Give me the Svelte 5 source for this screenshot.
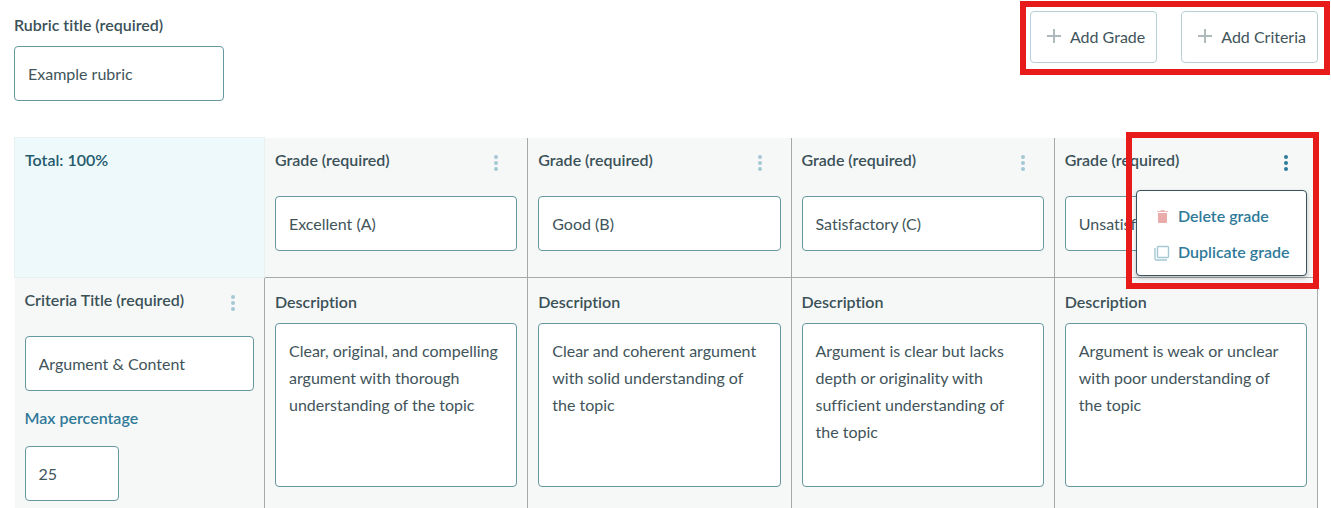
<script>
  let title = $state('Example rubric');
  let grades = $state([
    { name: 'Excellent (A)', description: 'Clear, original, and compelling argument with thorough understanding of the topic' },
    { name: 'Good (B)', description: 'Clear and coherent argument with solid understanding of the topic' },
    { name: 'Satisfactory (C)', description: 'Argument is clear but lacks depth or originality with sufficient understanding of the topic' },
    { name: 'Unsatisfactory (D)', description: 'Argument is weak or unclear with poor understanding of the topic' }
  ]);
  let criteria = $state({ title: 'Argument & Content', max: '25' });
  let openMenu = $state(3);
</script>

{#snippet plus()}
  <svg class="plus" width="14" height="14" viewBox="0 0 14 14" aria-hidden="true">
    <path d="M7 0v14M0 7h14" stroke="#b0b9bc" stroke-width="2" fill="none" />
  </svg>
{/snippet}

{#snippet dots()}
  <svg width="4" height="16" viewBox="0 0 4 16" aria-hidden="true">
    <circle cx="2" cy="2" r="2" /><circle cx="2" cy="8" r="2" /><circle cx="2" cy="14" r="2" />
  </svg>
{/snippet}

<main>
  <header>
    <div class="title-field">
      <label for="rubric-title">Rubric title (required)</label>
      <input id="rubric-title" type="text" bind:value={title} />
    </div>
    <div class="actions">
      <button type="button">{@render plus()}Add Grade</button>
      <button type="button">{@render plus()}Add Criteria</button>
    </div>
  </header>

  <table>
    <tbody>
      <tr>
        <th class="total" scope="col">Total: 100%</th>
        {#each grades as grade, i}
          <th scope="col">
            <div class="cell-head">
              <label for="grade-{i}">Grade (required)</label>
              <button
                type="button"
                class="kebab"
                class:open={openMenu === i}
                aria-label="Grade options"
                onclick={() => (openMenu = openMenu === i ? -1 : i)}
              >{@render dots()}</button>
            </div>
            <input id="grade-{i}" type="text" bind:value={grade.name} />
            {#if openMenu === i}
              <div class="callout"></div>
              <div class="menu">
                <button type="button">
                  <svg width="16" height="16" viewBox="0 0 16 16" aria-hidden="true">
                    <path d="M3 2h3l1-1h3l1 1h3v1H3z" fill="#eeb5b5" />
                    <path d="M4 4h9v9q0 1-1 1H5q-1 0-1-1z" fill="#eaabab" />
                  </svg>
                  <span>Delete grade</span>
                </button>
                <button type="button">
                  <svg width="16" height="16" viewBox="0 0 16 16" aria-hidden="true">
                    <rect x="3.500" y="1.500" width="11" height="11" rx="1" fill="#fff" stroke="#a5c8d4" stroke-width="1.400" />
                    <path d="M1 3v11q0 1 1 1h11" fill="none" stroke="#a5c8d4" stroke-width="1.400" />
                  </svg>
                  <span>Duplicate grade</span>
                </button>
              </div>
            {/if}
          </th>
        {/each}
      </tr>
      <tr>
        <th class="criteria" scope="row">
          <div class="cell-head">
            <label for="criteria-title">Criteria Title (required)</label>
            <button type="button" class="kebab" aria-label="Criteria options">{@render dots()}</button>
          </div>
          <input id="criteria-title" type="text" bind:value={criteria.title} />
          <label class="max-label" for="max">Max percentage</label>
          <input id="max" class="max" type="text" inputmode="numeric" bind:value={criteria.max} />
        </th>
        {#each grades as grade, i}
          <td>
            <label for="description-{i}">Description</label>
            <textarea id="description-{i}" bind:value={grade.description}></textarea>
          </td>
        {/each}
      </tr>
    </tbody>
  </table>
</main>

<style>
  :global(body) {
    margin: 0;
    background: #fff;
  }
  main,
  input,
  textarea,
  button {
    font-family: Lato, sans-serif;
    font-size: 16px;
    font-variant-ligatures: none;
    color: #41545a;
  }
  main {
    line-height: 24px;
  }
  * {
    box-sizing: border-box;
  }
  header {
    display: flex;
    justify-content: space-between;
    align-items: flex-start;
    padding: 1px 1px 36px 14px;
  }
  .title-field {
    width: 210px;
    padding-top: 12px;
  }
  label,
  th {
    font-weight: 600;
    text-align: left;
    color: #3b5158;
  }
  label {
    display: block;
  }
  input,
  textarea {
    display: block;
    width: 100%;
    margin: 0;
    padding: 0 13px;
    border: 1px solid #66989f;
    border-radius: 4px;
    background: #fff;
    outline: none;
  }
  input {
    height: 55px;
  }
  .title-field input {
    margin-top: 9px;
  }
  .actions {
    display: flex;
    gap: 24px;
    padding: 4px 6px 6px 4px;
    border: 6px solid #e81b1b;
  }
  .actions button {
    display: flex;
    align-items: center;
    gap: 9px;
    height: 52px;
    padding: 0 11px 2px 16px;
    border: 1px solid #b8d0d3;
    border-radius: 4px;
    background: #fff;
    white-space: nowrap;
  }
  table {
    width: calc(100% - 27px);
    margin: 0 13px 0 14px;
    table-layout: fixed;
    border-collapse: collapse;
  }
  th,
  td {
    position: relative;
    vertical-align: top;
    background: #f6f8f7;
    border-right: 1px solid #a5a9a9;
  }
  th {
    padding: 10px 10px 26px;
  }
  td {
    padding: 12px 10px 21px;
    border-top: 1px solid #a5a9a9;
  }
  .total {
    width: 250px;
    background: #edf9fb;
    border: 1px solid #e9f0f0;
    color: #245a6c;
  }
  .criteria {
    padding-bottom: 7px;
  }
  .cell-head {
    display: flex;
    justify-content: space-between;
  }
  .cell-head + input {
    margin-top: 24px;
  }
  .kebab {
    display: flex;
    align-items: flex-end;
    height: 24px;
    margin-right: 19px;
    padding: 0 0 1px;
    border: 0;
    background: none;
    line-height: 0;
  }
  .kebab svg {
    fill: #a5c8d4;
  }
  .kebab.open svg {
    fill: #2d7d9a;
  }
  .max-label {
    margin: 15px 0 16px;
    color: #2f7a99;
  }
  .max {
    width: 94px;
  }
  textarea {
    height: 164px;
    margin-top: 9px;
    padding: 13px;
    line-height: 27px;
    resize: none;
    overflow: hidden;
  }
  .callout {
    position: absolute;
    z-index: 2;
    top: -6px;
    right: -2px;
    width: 193px;
    height: 157px;
    border: 6px solid #e81b1b;
    pointer-events: none;
  }
  .menu {
    position: absolute;
    z-index: 3;
    top: 52px;
    right: 10px;
    width: 171px;
    padding: 7px 0 5px;
    border: 1px solid #3a535c;
    border-radius: 4px;
    background: #fff;
    box-shadow: 0 2px 4px rgb(0 0 0 / 25%);
  }
  .menu button {
    display: flex;
    align-items: center;
    gap: 8px;
    width: 100%;
    height: 36px;
    padding: 0 0 0 17px;
    border: 0;
    background: none;
    color: #2f7a99;
    font-weight: 600;
    white-space: nowrap;
  }
  .menu svg {
    flex: none;
    margin-top: 3px;
  }
</style>
